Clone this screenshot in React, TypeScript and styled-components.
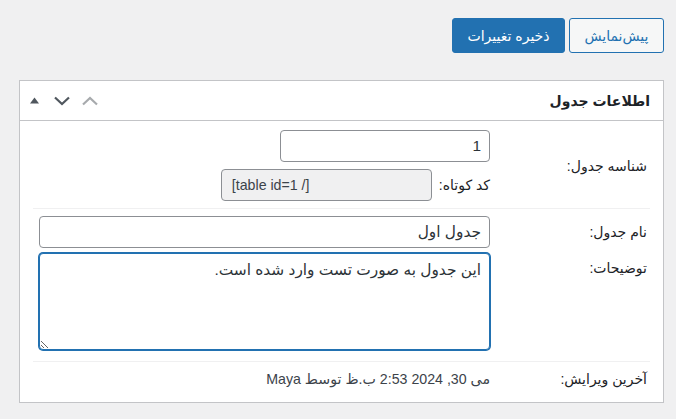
import styled, { createGlobalStyle } from "styled-components";

const GlobalStyle = createGlobalStyle`
  html, body {
    margin: 0;
    background: #f0f0f1;
  }
  body {
    font-family: "Liberation Sans", "DejaVu Sans", sans-serif;
    font-size: 14px;
    color: #1d2327;
  }
`;

const Page = styled.div`
  direction: rtl;
  padding: 18px 12px 0 19px;
`;

const Actions = styled.div`
  display: flex;
  gap: 4px;
  margin-bottom: 27px;
`;

const Button = styled.button<{ $primary?: boolean }>`
  box-sizing: border-box;
  height: 35px;
  padding: 0 14.5px;
  border: 1px solid #2271b1;
  border-radius: 3px;
  font-family: inherit;
  font-size: 14px;
  background: ${(p) => (p.$primary ? "#2271b1" : "#f6f7f7")};
  color: ${(p) => (p.$primary ? "#fff" : "#2271b1")};
  cursor: pointer;
`;

const Postbox = styled.div`
  background: #fff;
  border: 1px solid #c3c4c7;
`;

const Header = styled.div`
  display: flex;
  align-items: center;
  justify-content: space-between;
  height: 39px;
  padding-right: 13px;
  border-bottom: 1px solid #c3c4c7;
`;

const Title = styled.h2`
  margin: 0;
  font-size: 14px;
  font-weight: 700;
`;

const HandleActions = styled.div`
  display: flex;
  height: 100%;
`;

const HandleButton = styled.button<{ $muted?: boolean }>`
  display: flex;
  align-items: center;
  justify-content: center;
  width: 28px;
  height: 100%;
  padding: 0;
  border: 0;
  background: none;
  color: ${(p) => (p.$muted ? "#a7aaad" : "#50575e")};
`;

const Body = styled.div`
  padding: 0 13px;
`;

const Row = styled.div<{ $pt: number; $pb: number; $sep?: boolean }>`
  display: grid;
  grid-template-columns: 160px 1fr;
  padding: ${(p) => `${p.$pt}px 0 ${p.$pb}px`};
  border-bottom: ${(p) => (p.$sep ? "1px solid #f0f0f1" : "0")};
`;

const Label = styled.div<{ $top?: number }>`
  padding-right: 3px;
  line-height: 20px;
  align-self: ${(p) => (p.$top !== undefined ? "start" : "center")};
  padding-top: ${(p) => p.$top ?? 0}px;
`;

const Stack = styled.div`
  display: flex;
  flex-direction: column;
  align-items: flex-start;
  gap: 7px;
`;

const Inline = styled.div`
  display: flex;
  align-items: center;
  gap: 7px;
  line-height: 20px;
`;

const TextInput = styled.input<{ $width?: number }>`
  box-sizing: border-box;
  width: ${(p) => (p.$width ? `${p.$width}px` : "calc(100% - 6px)")};
  height: 32px;
  margin: 0;
  padding: 0 8px;
  border: 1px solid #8c8f94;
  border-radius: 4px;
  font-family: inherit;
  font-size: 15.4px;
  color: #2c3338;
  background: #fff;
  &[readonly] {
    padding: 0 10px;
    font-size: 14.2px;
    background: #f0f0f1;
    color: #3c434a;
  }
`;

const TextArea = styled.textarea`
  box-sizing: border-box;
  display: block;
  width: calc(100% - 6px);
  height: 97px;
  margin: 0;
  padding: 6px 8px;
  border: 1px solid #2271b1;
  box-shadow: 0 0 0 1px #2271b1;
  border-radius: 4px;
  font-family: inherit;
  font-size: 15.4px;
  line-height: 20px;
  color: #2c3338;
  outline: none;
`;

const Meta = styled.div`
  line-height: 20px;
  font-size: 14.2px;
  color: #3c434a;
`;

const Triangle = () => (
  <svg width="9" height="7" viewBox="0 0 9 7">
    <polygon points="0,6.5 4.5,0.5 9,6.5" fill="currentColor" />
  </svg>
);

const Chevron = ({ up }: { up?: boolean }) => (
  <svg width="16" height="10" viewBox="0 0 16 10">
    <path
      d={up ? "M1 8.5 L8 2 L15 8.5" : "M1 1.5 L8 8 L15 1.5"}
      fill="none"
      stroke="currentColor"
      strokeWidth="2.2"
    />
  </svg>
);

export default function App() {
  return (
    <>
      <GlobalStyle />
      <Page>
        <Actions>
          <Button>پیش‌نمایش</Button>
          <Button $primary>ذخیره تغییرات</Button>
        </Actions>

        <Postbox>
          <Header>
            <Title>اطلاعات جدول</Title>
            <HandleActions>
              <HandleButton $muted aria-label="move up">
                <Chevron up />
              </HandleButton>
              <HandleButton aria-label="move down">
                <Chevron />
              </HandleButton>
              <HandleButton aria-label="toggle">
                <Triangle />
              </HandleButton>
            </HandleActions>
          </Header>

          <Body>
            <Row $pt={9} $pb={7} $sep>
              <Label>شناسه جدول:</Label>
              <Stack>
                <TextInput $width={210} defaultValue="1" />
                <Inline>
                  <span>کد کوتاه:</span>
                  <TextInput $width={211} dir="ltr" readOnly defaultValue="[table id=1 /]" />
                </Inline>
              </Stack>
            </Row>

            <Row $pt={7} $pb={0}>
              <Label>نام جدول:</Label>
              <TextInput defaultValue="جدول اول" />
            </Row>

            <Row $pt={5} $pb={11} $sep>
              <Label $top={5}>توضیحات:</Label>
              <TextArea defaultValue="این جدول به صورت تست وارد شده است." />
            </Row>

            <Row $pt={7} $pb={13}>
              <Label>آخرین ویرایش:</Label>
              <Meta>می 30, 2024 2:53 ب.ظ توسط Maya</Meta>
            </Row>
          </Body>
        </Postbox>
      </Page>
    </>
  );
}
